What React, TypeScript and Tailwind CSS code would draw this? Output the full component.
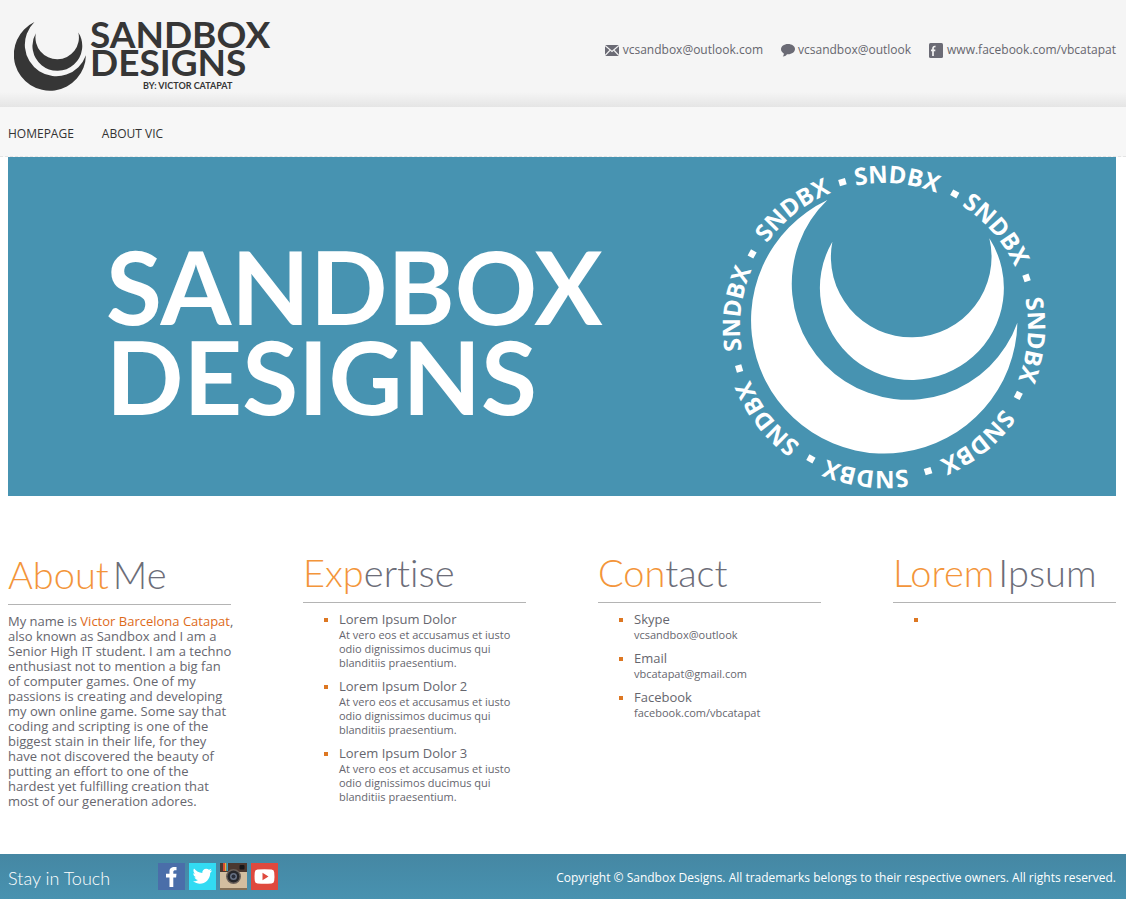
import type { ReactNode } from 'react';

const SERVICES = ['Lorem Ipsum Dolor', 'Lorem Ipsum Dolor 2', 'Lorem Ipsum Dolor 3'];

const CONTACTS = [
  { title: 'Skype', detail: 'vcsandbox@outlook' },
  { title: 'Email', detail: 'vbcatapat@gmail.com' },
  { title: 'Facebook', detail: 'facebook.com/vbcatapat' },
];

const ABOUT_LINES = [
  'also known as Sandbox and I am a',
  'Senior High IT student. I am a techno',
  'enthusiast not to mention a big fan',
  'of computer games. One of my',
  'passions is creating and developing',
  'my own online game. Some say that',
  'coding and scripting is one of the',
  'biggest stain in their life, for they',
  'have not discovered the beauty of',
  'putting an effort to one of the',
  'hardest yet fulfilling creation that',
  'most of our generation adores.',
];

// Angles, clockwise from the top, of the squares and words around the badge.
const RING = [
  { square: -16, word: 5 },
  { square: 28, word: 49 },
  { square: 71, word: 95 },
  { square: 117, word: 141 },
  { square: 163, word: 187 },
  { square: 209, word: 232 },
  { square: 254, word: 277 },
  { square: 299, word: 322 },
];

function Crescents() {
  return (
    <>
      <path d="M380 125A348.500 348.500 0 1 0 950 493A399.500 399.500 0 1 1 380 125Z" />
      <path d="M395 250A241 241 0 1 0 866 240A276 276 0 1 1 395 250Z" />
    </>
  );
}

function Badge() {
  return (
    <svg viewBox="-7 -7 338 338" className="w-[338px] shrink-0" fill="white" role="img" aria-label="Sandbox badge">
      <defs>
        <path id="arc" d="M18 162A144 144 0 0 1 306 162" />
      </defs>
      <g transform="translate(-21.3 -6.7) scale(.33333)">
        <Crescents />
      </g>
      {RING.map(({ square, word }) => (
        <g key={square}>
          <text
            fontSize="24"
            fontWeight="700"
            textAnchor="middle"
            transform={`rotate(${word} 162 162)`}
            className="font-['Open_Sans',sans-serif]"
          >
            <textPath href="#arc" startOffset="50%">SNDBX</textPath>
          </text>
          <rect x="158.500" y="8" width="7" height="6.500" transform={`rotate(${square} 162 162)`} />
        </g>
      ))}
    </svg>
  );
}

function Bullet({ children }: { children?: ReactNode }) {
  return (
    <li className="flex min-h-4 gap-[11px] pl-[21px]">
      <span className="mt-[6px] size-1 shrink-0 bg-[#dd7722]" />
      <div>{children}</div>
    </li>
  );
}

function Heading({ warm, cool, split }: { warm: string; cool: string; split?: boolean }) {
  return (
    <h2 className="mb-[9px] h-[52px] whitespace-nowrap border-b border-[#b4b4b4] font-['Lato',sans-serif] text-[38px] font-light leading-[42px] text-[#6c6d78] [font-variant-ligatures:none]">
      <span className={split ? 'mr-1 text-[#f3953a]' : 'text-[#f3953a]'}>{warm}</span>
      <span>{cool}</span>
    </h2>
  );
}

function Entry({ title, detail }: { title: string; detail: string }) {
  return (
    <Bullet>
      <h3 className="text-[13px] leading-[15px]">{title}</h3>
      <p className="pt-px text-[11px] leading-[14px]">{detail}</p>
    </Bullet>
  );
}

export default function App() {
  return (
    <div className="bg-white font-['Open_Sans',sans-serif] text-[#66666e]">
      <header className="flex h-[107px] items-start justify-between bg-[linear-gradient(#f5f5f5_86%,#e5e5e5)] pl-[14px] pr-[10px]">
        <a href="#home" className="flex pt-[19px] text-[#363636]">
          <svg viewBox="153 125 798 763" className="mt-[3px] h-[69px] w-[72px]" fill="currentColor" aria-hidden="true">
            <Crescents />
          </svg>
          <span className="ml-1 flex flex-col font-['Lato',sans-serif] text-[37px] font-bold leading-[28px]">
            <span className="pt-[1px]">SANDBOX</span>
            <span>DESIGNS</span>
            <span className="pl-[53px] pt-[2px] text-[9px] font-bold leading-[16px]">BY: VICTOR CATAPAT</span>
          </span>
        </a>
        <ul className="flex gap-[18px] pt-[42px] text-[12px] leading-4">
          <li>
            <a href="mailto:vcsandbox@outlook.com" className="flex items-center gap-1">
              <svg viewBox="0 0 14 11" className="h-[11px] w-[14px]" aria-hidden="true">
                <path fill="#6b6b75" d="M0 0h14v11H0z" />
                <path fill="none" stroke="#f4f4f4" strokeWidth="1.200" d="M0 .5l7 6 7-6M0 10.500l4.800-5M14 10.500l-4.800-5" />
              </svg>
              vcsandbox@outlook.com
            </a>
          </li>
          <li>
            <a href="#skype" className="flex items-center gap-[3px]">
              <svg viewBox="0 0 14 13" className="h-[13px] w-[14px]" fill="#6b6b75" aria-hidden="true">
                <path d="M7 0c4 0 7 2.200 7 5s-3 5.300-7 5.300l-1-.1C5 11.500 3.500 12.500 1.800 12.500c.8-.9 1.100-2 1-3C1 8.500 0 7 0 5.300 0 2.300 3 0 7 0Z" />
              </svg>
              vcsandbox@outlook
            </a>
          </li>
          <li>
            <a href="#facebook" className="flex items-center gap-1">
              <svg viewBox="0 0 14 15" className="h-[15px] w-[14px]" aria-hidden="true">
                <rect width="14" height="15" rx="1.500" fill="#6b6b75" />
                <path fill="none" stroke="#f4f4f4" strokeWidth="1.700" d="M6.500 3.600C4.900 3.200 4 4 4 5.500V13M2 7.300h4.300" />
              </svg>
              www.facebook.com/vbcatapat
            </a>
          </li>
        </ul>
      </header>

      <nav className="flex h-[50px] items-center gap-[28px] border-b border-dashed border-[#e4e4e4] bg-[#f7f7f7] px-2 pt-1 text-[12px] text-[#333]">
        <a href="#home">HOMEPAGE</a>
        <a href="#about">ABOUT VIC</a>
      </nav>

      <main className="pl-2 pr-[10px]">
        <section className="flex h-[339px] items-center justify-between bg-[#4793b1] pl-[98px] pr-[63px]">
          <h1 className="flex flex-col pt-2 font-['Lato',sans-serif] text-[102px] font-bold leading-[90px] text-white">
            <span>SANDBOX</span>
            <span>DESIGNS</span>
          </h1>
          <Badge />
        </section>

        <div className="grid grid-cols-4 gap-[72px] pt-[55px]">
          <section id="about" className="pt-[2px]">
            <Heading warm="About" cool="Me" split />
            <p className="whitespace-nowrap text-[13px] leading-[15px]">
              My name is <a href="#victor" className="text-[#dd6a1a]">Victor Barcelona Catapat</a>,
              {ABOUT_LINES.map((line) => (
                <span key={line} className="block">{line}</span>
              ))}
            </p>
          </section>
          <section>
            <Heading warm="Exp" cool="ertise" />
            <ul className="flex flex-col gap-[9px]">
              {SERVICES.map((title) => (
                <Entry
                  key={title}
                  title={title}
                  detail="At vero eos et accusamus et iusto odio dignissimos ducimus qui blanditiis praesentium."
                />
              ))}
            </ul>
          </section>
          <section>
            <Heading warm="Con" cool="tact" />
            <ul className="flex flex-col gap-[9px]">
              {CONTACTS.map((contact) => (
                <Entry key={contact.title} {...contact} />
              ))}
            </ul>
          </section>
          <section>
            <Heading warm="Lorem" cool="Ipsum" split />
            <ul>
              <Bullet />
            </ul>
          </section>
        </div>
      </main>

      <footer className="mt-[45px] flex h-[45px] items-center justify-between bg-[linear-gradient(#4587a3,#4892b0)] pl-2 pr-[10px] text-white">
        <div className="flex items-center">
          <h2 className="w-[150px] pt-1 font-['Lato',sans-serif] text-[18px] font-light">Stay in Touch</h2>
          <div className="flex gap-1">
            <a href="#facebook" aria-label="Facebook">
              <svg viewBox="0 0 27 27" className="size-[27px]">
                <path fill="#4a6ea9" d="M0 0h27v27H0z" />
                <path fill="white" d="M11.500 24v-9.500H8v-3.700h3.500V8.500C11.500 5 13.500 3.500 18.500 4v3.300c-2.500-.1-3.200.3-3.200 1.700v1.800h3.200l-.4 3.700h-2.800V24Z" />
              </svg>
            </a>
            <a href="#twitter" aria-label="Twitter">
              <svg viewBox="0 0 27 27" className="size-[27px]">
                <path fill="#32dbf3" d="M0 0h27v27H0z" />
                <path fill="white" d="M4 17.300c2 .2 3.700-.3 5-1.300-1.800-.2-3-1.200-3.500-2.700h1.600C5.200 12.500 4.300 11 4.300 9.200l1.700.5C4.300 8.200 4 6.300 5 4.500c2.300 2.700 5 4.200 8.300 4.400C13 5.500 17 3.300 20 5.800l2.500-1-1.500 2.300 2.200-.5-2 2.300C21.200 17.500 12 23 4 17.300Z" transform="translate(0 1)" />
              </svg>
            </a>
            <a href="#instagram" aria-label="Instagram">
              <svg viewBox="0 0 27 27" className="size-[27px]">
                <path fill="#d3bea0" d="M0 0h27v27H0z" />
                <path fill="#4b3830" d="M0 0h27v9H0z" />
                <path fill="#d64c32" d="M3 0h2v8H3z" />
                <path fill="#e4b63e" d="M5 0h1.500v8H5z" />
                <path fill="#3e9ac0" d="M6.500 0H8v8H6.500z" />
                <rect x="19.500" y="2" width="5" height="4.500" rx="1" fill="#171719" />
                <circle cx="13.500" cy="13.500" r="7.500" fill="#69605a" />
                <circle cx="13.500" cy="13.500" r="6" fill="#26262a" />
                <circle cx="13.500" cy="13.500" r="3.500" fill="#667083" />
                <circle cx="13.500" cy="13.500" r="2" fill="#272c38" />
                <path fill="#857057" d="M0 25h27v2H0z" />
              </svg>
            </a>
            <a href="#youtube" aria-label="YouTube">
              <svg viewBox="0 0 27 27" className="size-[27px]">
                <path fill="#df493e" d="M0 0h27v27H0z" />
                <path fill="white" d="M6.500 6.500q7-.7 14 0 2.500.2 2.700 2.700.5 4.300 0 8.600-.2 2.500-2.700 2.700-7 .7-14 0-2.500-.2-2.700-2.700-.5-4.300 0-8.600.2-2.500 2.700-2.700Z" />
                <path fill="#df493e" d="M11.500 9.700v7.600l6-3.800Z" />
              </svg>
            </a>
          </div>
        </div>
        <p className="pt-[3px] text-[12px]">
          Copyright © Sandbox Designs. All trademarks belongs to their respective owners. All rights reserved.
        </p>
      </footer>
    </div>
  );
}
